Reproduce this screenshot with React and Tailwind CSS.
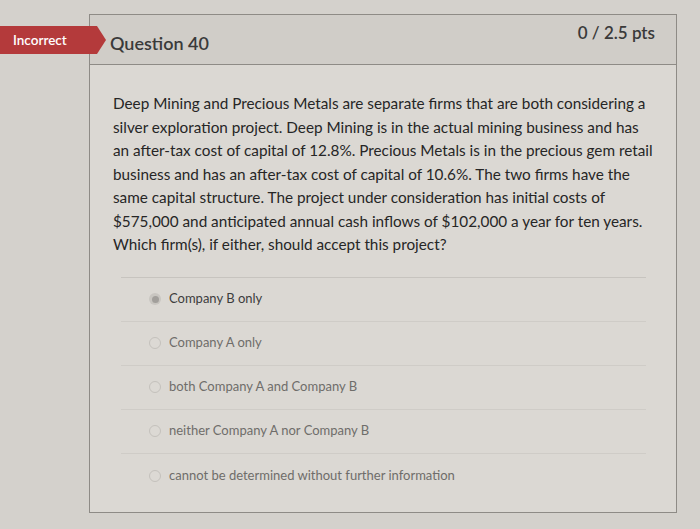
const ANSWERS = [
  { text: 'Company B only', selected: true },
  { text: 'Company A only' },
  { text: 'both Company A and Company B' },
  { text: 'neither Company A nor Company B' },
  { text: 'cannot be determined without further information' },
];

function Radio({ selected }) {
  return selected ? (
    <span className="w-[12px] h-[12px] rounded-full bg-[#c9c6c1] flex items-center justify-center shrink-0">
      <span className="w-[7px] h-[7px] rounded-full bg-[#a29f9b]" />
    </span>
  ) : (
    <span className="w-[12px] h-[12px] rounded-full border border-[#c4c1bc] bg-[#dcd9d4] shrink-0" />
  );
}

export default function App() {
  return (
    <div
      className="w-[700px] h-[529px] bg-[#d4d1cc] pt-[14px] overflow-hidden"
      style={{ fontFamily: 'Lato, "Open Sans", sans-serif' }}
    >
      <div className="relative ml-[89px] w-[588px] h-[499px] border border-[#8e8b86] bg-[#dbd8d3]">
        {/* Incorrect tag */}
        <div className="absolute -left-[90px] top-[11px] flex items-center">
          <div className="h-[28px] w-[97px] bg-[#b43a3b] text-white text-[13.5px] font-semibold flex items-center pl-[13px]">
            Incorrect
          </div>
          <div className="w-0 h-0 border-t-[14px] border-b-[14px] border-l-[9px] border-t-transparent border-b-transparent border-l-[#b43a3b]" />
        </div>

        {/* Header */}
        <div className="h-[50px] bg-[#d0cdc8] border-b border-[#8e8b86] flex items-center justify-between pl-[20px] pr-[21px]">
          <span className="text-[18px] font-semibold text-[#3a3a3a] mt-[8px]">Question 40</span>
          <span className="text-[17px] font-semibold text-[#3a3a3a] -mt-[14px]">0 / 2.5 pts</span>
        </div>

        {/* Body */}
        <div className="pl-[23px] pr-[20px] pt-[27px]">
          <p className="text-[15.3px] leading-[23.5px] text-[#262626]">
            Deep Mining and Precious Metals are separate firms that are both considering a<br />
            silver exploration project. Deep Mining is in the actual mining business and has<br />
            an after-tax cost of capital of 12.8%. Precious Metals is in the precious gem retail<br />
            business and has an after-tax cost of capital of 10.6%. The two firms have the<br />
            same capital structure. The project under consideration has initial costs of<br />
            $575,000 and anticipated annual cash inflows of $102,000 a year for ten years.<br />
            Which firm(s), if either, should accept this project?
          </p>

          <div className="mt-[20px] mr-[10px] ml-[8px] border-t border-[#c7c4bf]">
            {ANSWERS.map((a, i) => (
              <div
                key={a.text}
                className={`h-[44px] flex items-center gap-[8px] pl-[28px] ${i < ANSWERS.length - 1 ? 'border-b border-[#cfccc7]' : ''}`}
              >
                <Radio selected={a.selected} />
                <span className={`text-[13px] ${a.selected ? 'text-[#3d3d3d]' : 'text-[#6f6d6a]'}`}>{a.text}</span>
              </div>
            ))}
          </div>
        </div>
      </div>
    </div>
  );
}
